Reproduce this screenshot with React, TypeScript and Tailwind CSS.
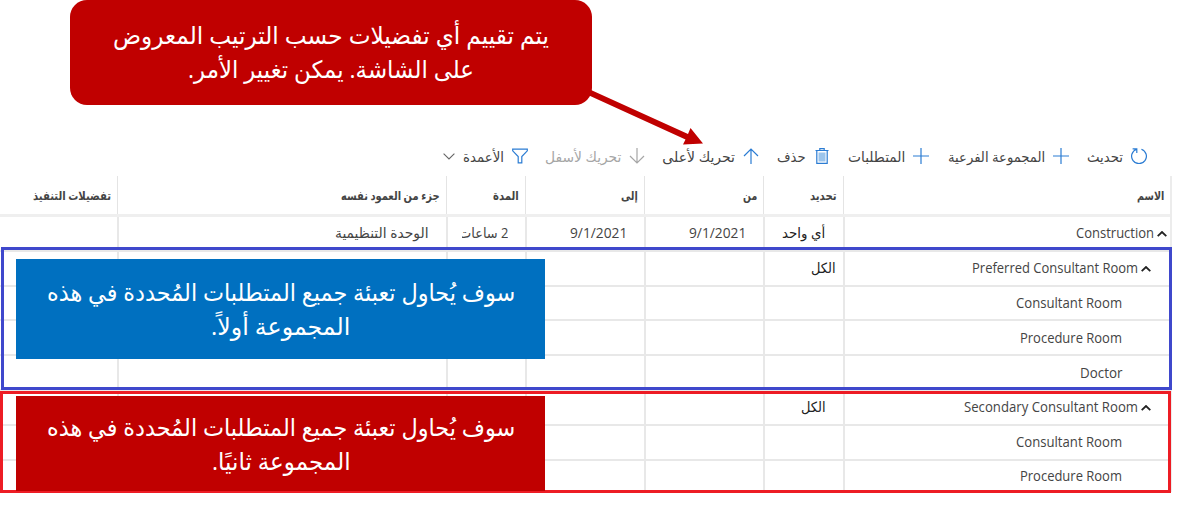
import { useLayoutEffect, useRef, useState } from "react";
import type { ReactNode } from "react";

/** One line of text, stretched or condensed to the given advance width. */
function FitText({ text, width, dir = "rtl", className = "" }: { text: string; width: number; dir?: "rtl" | "ltr"; className?: string }) {
  const ref = useRef<HTMLSpanElement>(null);
  const [scale, setScale] = useState(1);
  useLayoutEffect(() => {
    if (ref.current) setScale(width / ref.current.offsetWidth);
  }, [width, text]);
  return (
    <span className="flex shrink-0 justify-start" dir="rtl" style={{ width }}>
      <span ref={ref} dir={dir} className={`inline-block shrink-0 origin-right whitespace-nowrap ${className}`} style={{ transform: `scaleX(${scale})` }}>
        {text}
      </span>
    </span>
  );
}

function Icon({ children, className = "text-[#2b7cd3]" }: { children: ReactNode; className?: string }) {
  return (
    <svg viewBox="0 0 16 16" className={`h-4 w-4 shrink-0 ${className}`} fill="none" stroke="currentColor" strokeWidth="1.2">
      {children}
    </svg>
  );
}

const icons = {
  refresh: (
    <Icon>
      <path d="M1.6.9h4.2v4.2M5.6 1.2A7.4 7.4 0 1 0 10.4 1.2" />
    </Icon>
  ),
  plus: (
    <Icon>
      <path d="M8 0v16M0 8h16" />
    </Icon>
  ),
  trash: (
    <Icon>
      <path d="M4.5 4.5h7v9h-7z" fill="#9cc5ec" stroke="none" />
      <path d="M1.5 2.5h13M5.8 2.3V.6h4.4v1.7M2.8 2.7v12.7h10.4V2.7" />
    </Icon>
  ),
  up: (
    <Icon>
      <path d="M8 16V1M1 8l7-7 7 7" />
    </Icon>
  ),
  down: (
    <Icon className="text-[#a6a6a6]">
      <path d="M8 0v15M1 8l7 7 7-7" />
    </Icon>
  ),
  filter: (
    <Icon>
      <path d="M.7 1.2h14.6v1.6L9.8 8.6v6.2H6.2V8.6L.7 2.8z" />
    </Icon>
  ),
};

function Tool({ icon, text, width, className = "text-[#444]" }: { icon: ReactNode; text: string; width: number; className?: string }) {
  return (
    <div className={`flex items-center gap-2 text-[14px] leading-[19px] ${className}`}>
      {icon}
      <FitText text={text} width={width} />
    </div>
  );
}

const columns = "grid grid-cols-[327px_80px_119px_119px_79px_329px_118px]";

const headers: [string, number][] = [
  ["الاسم", 27],
  ["تحديد", 27],
  ["من", 14],
  ["إلى", 17],
  ["المدة", 26],
  ["جزء من العمود نفسه", 99],
  ["تفضيلات التنفيذ", 78],
];

type Row = { name: string; width: number; level: 0 | 1 | 2; select?: ReactNode; details?: boolean };

const rows: Row[] = [
  { name: "Construction", width: 78, level: 0, details: true, select: <span className="pr-[18px]"><FitText text="أي واحد" width={43} /></span> },
  { name: "Preferred Consultant Room", width: 166, level: 1, select: <span className="pr-[8px]"><FitText text="الكل" width={25} /></span> },
  { name: "Consultant Room", width: 106, level: 2 },
  { name: "Procedure Room", width: 102, level: 2 },
  { name: "Doctor", width: 42, level: 2 },
  { name: "Secondary Consultant Room", width: 174, level: 1, select: <span className="pr-[18px]"><FitText text="الكل" width={25} /></span> },
  { name: "Consultant Room", width: 106, level: 2 },
  { name: "Procedure Room", width: 102, level: 2 },
];

const indents = ["pr-[3px]", "pr-[19px]", "pr-[48px]"];
const cell = "flex items-center border-l-2 border-[#e8e8e8]";

function Caret() {
  return (
    <svg viewBox="0 0 10 6" className="mt-0.5 h-[6px] w-[10px] shrink-0" fill="none" stroke="#222" strokeWidth="1.8">
      <path d="M.7 5.2 5 1l4.3 4.2" />
    </svg>
  );
}

function Note({ first, second, className }: { first: [string, number]; second: [string, number]; className: string }) {
  return (
    <div className={`absolute flex flex-col items-center text-[24px] leading-[34px] text-white ${className}`}>
      <FitText text={first[0]} width={first[1]} />
      <FitText text={second[0]} width={second[1]} />
    </div>
  );
}

export default function App() {
  return (
    <main dir="rtl" className="relative h-[516px] w-[1182px] overflow-hidden bg-white pt-[142px] font-['Open_Sans','DejaVu_Sans',sans-serif] text-[#444]">
      <nav className="flex h-[34px] items-center pr-[35px] pb-1.5">
        <Tool icon={icons.refresh} text="تحديث" width={36} />
        <span className="w-[18px]" />
        <Tool icon={icons.plus} text="المجموعة الفرعية" width={97} />
        <span className="w-[19px]" />
        <Tool icon={icons.plus} text="المتطلبات" width={57} />
        <span className="w-[18px]" />
        <Tool icon={icons.trash} text="حذف" width={29} />
        <span className="w-[18px]" />
        <Tool icon={icons.up} text="تحريك لأعلى" width={73} />
        <span className="w-[17px]" />
        <Tool icon={icons.down} text="تحريك لأسفل" width={76} className="text-[#a6a6a6]" />
        <span className="w-[17px]" />
        <Tool icon={icons.filter} text="الأعمدة" width={41} />
        <svg viewBox="0 0 12 7" className="mr-2 h-[7px] w-3" fill="none" stroke="#666" strokeWidth="1.1">
          <path d="M.6.7 6 6 11.4.7" />
        </svg>
      </nav>

      <section className="mr-[10px] w-[1172px] border-r-2 border-[#ececec]">
        <header className={`${columns} h-[41px] border-b-[3px] border-[#efefef]`}>
          {headers.map(([text, width]) => (
            <div key={text} className="flex items-center border-l border-[#e4e4e4] pt-[2px] pr-[6px] text-[12px] font-bold text-[#444] last:border-l-0">
              <FitText text={text} width={width} />
            </div>
          ))}
        </header>
        {rows.map((row, i) => (
          <div key={i} className={`${columns} h-[34.8px] border-b-2 border-[#e8e8e8] text-[14px] leading-[20px] last:h-[31px] last:border-b-0`}>
            <div className={`${cell} gap-[3px] ${indents[row.level]}`}>
              {row.level < 2 && <Caret />}
              <FitText text={row.name} width={row.width} dir="ltr" />
            </div>
            <div className={`${cell} text-[#222]`}>{row.select}</div>
            <div className={`${cell} pr-[17px]`}>{row.details && <FitText text="9/1/2021" width={57} dir="ltr" />}</div>
            <div className={`${cell} pr-[17px]`}>{row.details && <FitText text="9/1/2021" width={57} dir="ltr" />}</div>
            <div className={cell}>
              {row.details && (
                <span className="mr-[17px] w-[46px] overflow-hidden">
                  <FitText text="2 ساعات" width={49} />
                </span>
              )}
            </div>
            <div className={`${cell} pr-[18px]`}>{row.details && <FitText text="الوحدة التنظيمية" width={94} />}</div>
            <div />
          </div>
        ))}
      </section>

      <div className="absolute top-[247px] left-px h-[143px] w-[1171px] border-[3px] border-[#3f48cc]" />
      <div className="absolute top-[391px] left-0 h-[102px] w-[1171px] border-[3px] border-[#ed1c24]" />

      <svg className="absolute top-0 left-0 h-[150px] w-[720px]" fill="#c00000">
        <path d="M591 90 688 134 690.5 128 703 143.5 683 144.5 685.5 139.5 588 95z" />
      </svg>
      <Note
        className="top-0 left-[70px] h-[105px] w-[522px] rounded-[17px] bg-[#c00000] pt-[18px]"
        first={["يتم تقييم أي تفضيلات حسب الترتيب المعروض", 436]}
        second={["على الشاشة. يمكن تغيير الأمر.", 286]}
      />
      <Note
        className="top-[259px] left-4 h-[100px] w-[529px] bg-[#0070c0] pt-[16px] pl-px"
        first={["سوف يُحاول تعبئة جميع المتطلبات المُحددة في هذه", 468]}
        second={["المجموعة أولاً.", 139]}
      />
      <Note
        className="top-[396px] left-4 h-[95px] w-[529px] bg-[#c00000] pt-[14px] pl-px"
        first={["سوف يُحاول تعبئة جميع المتطلبات المُحددة في هذه", 468]}
        second={["المجموعة ثانيًا.", 139]}
      />
    </main>
  );
}
